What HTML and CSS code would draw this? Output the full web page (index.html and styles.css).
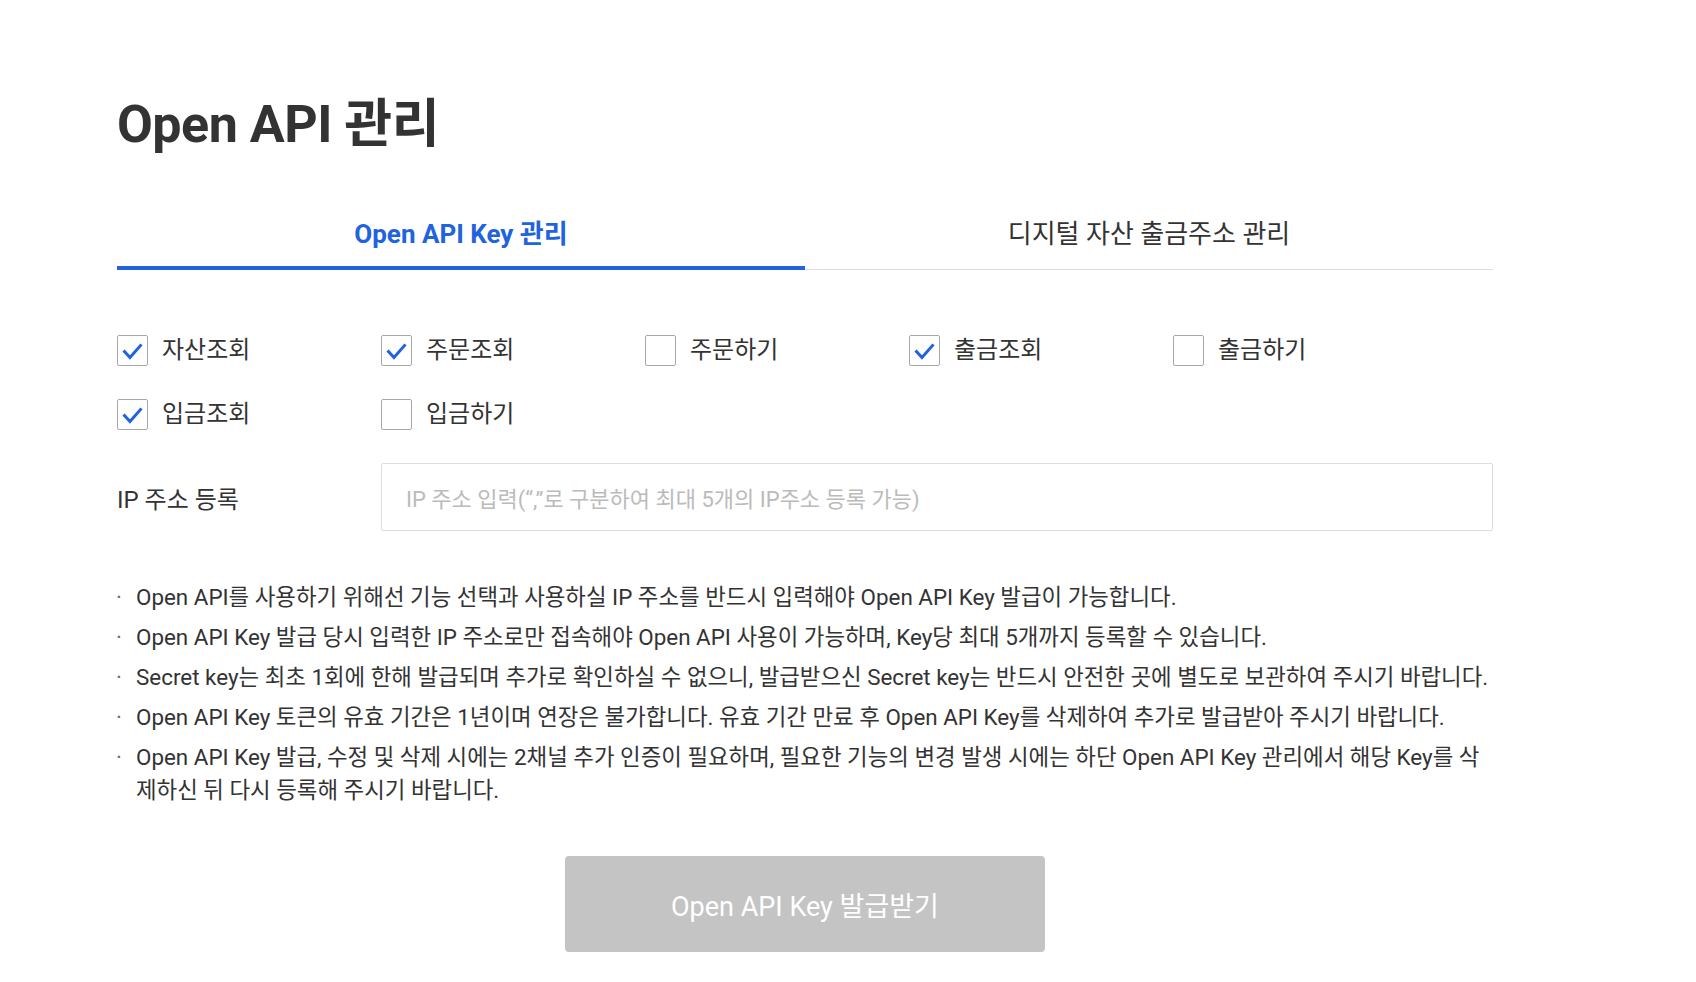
FILE: index.html
```html
<!DOCTYPE html>
<html lang="ko">
<head>
<meta charset="utf-8">
<title>Open API 관리</title>
<link rel="stylesheet" href="styles.css">
</head>
<body>
<main class="page">
  <h1 class="title">Open API 관리</h1>
  <nav class="tabs">
    <div class="tab tab-active">Open API Key 관리</div>
    <div class="tab">디지털 자산 출금주소 관리</div>
  </nav>

  <div class="perms">
    <label class="perm"><span class="box checked"><svg viewBox="0 0 31 31" width="31" height="31"><path d="M7.5 16.5 L13 22.5 L23.5 10.5" fill="none" stroke="#2063dd" stroke-width="3" stroke-linecap="square" stroke-linejoin="miter"/></svg></span><span class="perm-label">자산조회</span></label>
    <label class="perm"><span class="box checked"><svg viewBox="0 0 31 31" width="31" height="31"><path d="M7.5 16.5 L13 22.5 L23.5 10.5" fill="none" stroke="#2063dd" stroke-width="3" stroke-linecap="square" stroke-linejoin="miter"/></svg></span><span class="perm-label">주문조회</span></label>
    <label class="perm"><span class="box"></span><span class="perm-label">주문하기</span></label>
    <label class="perm"><span class="box checked"><svg viewBox="0 0 31 31" width="31" height="31"><path d="M7.5 16.5 L13 22.5 L23.5 10.5" fill="none" stroke="#2063dd" stroke-width="3" stroke-linecap="square" stroke-linejoin="miter"/></svg></span><span class="perm-label">출금조회</span></label>
    <label class="perm"><span class="box"></span><span class="perm-label">출금하기</span></label>
    <label class="perm"><span class="box checked"><svg viewBox="0 0 31 31" width="31" height="31"><path d="M7.5 16.5 L13 22.5 L23.5 10.5" fill="none" stroke="#2063dd" stroke-width="3" stroke-linecap="square" stroke-linejoin="miter"/></svg></span><span class="perm-label">입금조회</span></label>
    <label class="perm"><span class="box"></span><span class="perm-label">입금하기</span></label>
  </div>

  <div class="ip-row">
    <div class="ip-label">IP 주소 등록</div>
    <div class="ip-input">IP 주소 입력(“,”로 구분하여 최대 5개의 IP주소 등록 가능)</div>
  </div>

  <ul class="notes">
    <li>Open API를 사용하기 위해선 기능 선택과 사용하실 IP 주소를 반드시 입력해야 Open API Key 발급이 가능합니다.</li>
    <li>Open API Key 발급 당시 입력한 IP 주소로만 접속해야 Open API 사용이 가능하며, Key당 최대 5개까지 등록할 수 있습니다.</li>
    <li>Secret key는 최초 1회에 한해 발급되며 추가로 확인하실 수 없으니, 발급받으신 Secret key는 반드시 안전한 곳에 별도로 보관하여 주시기 바랍니다.</li>
    <li>Open API Key 토큰의 유효 기간은 1년이며 연장은 불가합니다. 유효 기간 만료 후 Open API Key를 삭제하여 추가로 발급받아 주시기 바랍니다.</li>
    <li>Open API Key 발급, 수정 및 삭제 시에는 2채널 추가 인증이 필요하며, 필요한 기능의 변경 발생 시에는 하단 Open API Key 관리에서 해당 Key를 삭제하신 뒤 다시 등록해 주시기 바랍니다.</li>
  </ul>

  <div class="actions">
    <button class="issue-btn" type="button">Open API Key 발급받기</button>
  </div>
</main>
</body>
</html>
```

FILE: styles.css
```css
html, body {
  margin: 0;
  padding: 0;
  background: #ffffff;
}

body {
  font-family: Roboto, "Noto Sans CJK KR", sans-serif;
  color: #333333;
}

.page {
  width: 1376px;
  margin-left: 117px;
  padding-top: 99px;
}

.title {
  margin: 0;
  font-size: 52px;
  line-height: 52px;
  font-weight: 700;
  color: #333333;
  letter-spacing: -0.5px;
}

.tabs {
  display: flex;
  margin-top: 51px;
  border-bottom: 1px solid #dddddd;
}

.tab {
  flex: 1;
  text-align: center;
  font-size: 26px;
  line-height: 30px;
  padding: 17px 0 17px;
  color: #333333;
  border-bottom: 4px solid transparent;
  margin-bottom: -1px;
}

.tab-active {
  color: #2063dd;
  font-weight: 700;
  border-bottom-color: #2063dd;
}

.perms {
  display: grid;
  grid-template-columns: repeat(5, 264px);
  row-gap: 32px;
  margin-top: 64px;
}

.perm {
  display: flex;
  align-items: center;
  height: 32px;
}

.box {
  box-sizing: border-box;
  width: 31px;
  height: 31px;
  border: 1px solid #a8a8a8;
  border-radius: 2px;
  position: relative;
  flex: none;
}

.box svg {
  position: absolute;
  left: -1px;
  top: -1px;
}

.perm-label {
  margin-left: 14px;
  font-size: 24px;
  line-height: 32px;
  color: #333333;
}

.ip-row {
  display: flex;
  align-items: center;
  margin-top: 33px;
}

.ip-label {
  width: 264px;
  font-size: 24px;
  color: #333333;
}

.ip-input {
  flex: 1;
  box-sizing: border-box;
  height: 68px;
  border: 1px solid #dddddd;
  border-radius: 2px;
  padding: 0 24px;
  display: flex;
  align-items: center;
  font-size: 22px;
  color: #bbbbbb;
}

.notes {
  list-style: none;
  margin: 50px 0 0;
  padding: 0;
}

.notes li {
  position: relative;
  padding-left: 19px;
  font-size: 22.4px;
  line-height: 33px;
  margin-bottom: 7px;
  color: #333333;
}

.notes li::before {
  content: "·";
  position: absolute;
  left: -1px;
  top: 0;
  color: #666666;
}

.actions {
  display: flex;
  justify-content: center;
  margin-top: 49px;
}

.issue-btn {
  width: 480px;
  height: 96px;
  border: none;
  border-radius: 4px;
  background: #c4c4c4;
  color: #ffffff;
  font-family: Roboto, "Noto Sans CJK KR", sans-serif;
  font-size: 27px;
}
```
